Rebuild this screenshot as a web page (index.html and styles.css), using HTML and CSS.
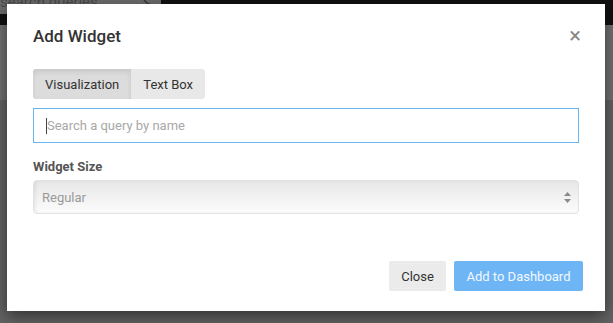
FILE: index.html
```html
<!DOCTYPE html>
<html>
<head>
<meta charset="utf-8">
<link rel="stylesheet" href="styles.css">
</head>
<body>
<div class="page">
  <div class="topbar">
    <div class="search-box"><span class="search-text">search queries...</span>
      <svg class="search-icon" width="10" height="6" viewBox="0 0 10 6"><path d="M1 0 L5 4 L7 4" stroke="#3a3a3a" stroke-width="1.5" fill="none"/></svg>
    </div>
  </div>
  <div class="page-header"></div>
  <div class="page-content"></div>
</div>

<div class="modal">
  <div class="modal-header">
    <h4 class="modal-title">Add Widget</h4>
    <span class="close-x">×</span>
  </div>
  <div class="modal-body">
    <div class="tabs">
      <button class="tab active">Visualization</button>
      <button class="tab">Text Box</button>
    </div>
    <div class="query-input"><span class="caret"></span><span class="placeholder">Search a query by name</span></div>
    <label class="field-label">Widget Size</label>
    <div class="select">
      <span class="select-value">Regular</span>
      <svg class="select-arrows" width="7" height="11" viewBox="0 0 7 11"><path d="M3.5 0 L7 4 L0 4 Z M0 7 L7 7 L3.5 11 Z" fill="#8a8a8a"/></svg>
    </div>
  </div>
  <div class="modal-footer">
    <button class="btn btn-default">Close</button>
    <button class="btn btn-primary">Add to Dashboard</button>
  </div>
</div>
</body>
</html>
```

FILE: styles.css
```css
* { box-sizing: border-box; }
html, body { margin: 0; padding: 0; }
body {
  width: 613px;
  height: 323px;
  overflow: hidden;
  background: #656565;
  font-family: Roboto, "Noto Sans", sans-serif;
  position: relative;
}
.page { width: 613px; height: 323px; }
.topbar {
  height: 25px;
  background: #111111;
  display: flex;
}
.search-box {
  width: 161px;
  height: 14px;
  background: #6c6c6c;
  position: relative;
  overflow: hidden;
}
.search-text {
  position: absolute;
  left: 0;
  top: -5px;
  font-size: 15px;
  line-height: 15px;
  color: #4a4a4a;
}
.search-icon {
  position: absolute;
  left: 143px;
  top: 0;
}
.page-header { height: 75px; background: #717171; }
.page-content { height: 223px; background: #636363; }

.modal {
  position: absolute;
  left: 7px;
  top: 4px;
  width: 598px;
  height: 307px;
  background: #fff;
  box-shadow: 0 5px 15px rgba(0,0,0,0.5);
  display: flex;
  flex-direction: column;
}
.modal-header {
  height: 64px;
  padding: 0 26px;
  display: flex;
  align-items: center;
  justify-content: space-between;
}
.modal-title {
  margin: 0;
  font-size: 17px;
  font-weight: 500;
  color: #333;
}
.close-x {
  font-size: 22px;
  font-weight: 400;
  color: #858585;
  margin-right: -2px;
  margin-top: -2px;
}
.modal-body {
  padding: 1px 26px 0 26px;
  display: flex;
  flex-direction: column;
}
.tabs { display: flex; }
.tab {
  height: 30px;
  border: none;
  font-family: inherit;
  font-size: 13px;
  color: #333;
  padding: 0 12px;
  background: #e8e8e8;
}
.tab:first-child { border-radius: 3px 0 0 3px; }
.tab:last-child { border-radius: 0 3px 3px 0; }
.tab.active {
  background: #dcdcdc;
  box-shadow: inset 0 3px 5px rgba(0,0,0,0.09);
}
.query-input {
  margin-top: 9px;
  width: 546px;
  height: 35px;
  border: 1px solid #66b5f0;
  display: flex;
  align-items: center;
  padding-left: 12px;
  font-size: 13px;
}
.caret { width: 1px; height: 16px; background: #444; }
.placeholder { color: #a8a8a8; }
.field-label {
  margin-top: 16px;
  font-size: 13px;
  font-weight: 700;
  color: #555;
}
.select {
  margin-top: 6px;
  width: 546px;
  height: 34px;
  border-radius: 4px;
  border: 1px solid #e2e2e2;
  background: linear-gradient(#e7e7e7, #f0f0f0 45%, #fcfcfc);
  box-shadow: inset 2px 0 3px rgba(0,0,0,0.06);
  display: flex;
  align-items: center;
  justify-content: space-between;
  padding: 0 7px 0 8px;
  font-size: 13px;
}
.select-value { color: #9a9a9a; }
.modal-footer {
  margin-top: auto;
  padding: 0 22px 20px 0;
  display: flex;
  justify-content: flex-end;
  gap: 8px;
}
.btn {
  height: 30px;
  border: none;
  border-radius: 2px;
  font-family: inherit;
  font-size: 13px;
  padding: 0 12px;
}
.btn-default { background: #ebebeb; color: #333; width: 57px; }
.btn-primary { background: #6db5f5; color: #f4f8ff; width: 129px; }
```
